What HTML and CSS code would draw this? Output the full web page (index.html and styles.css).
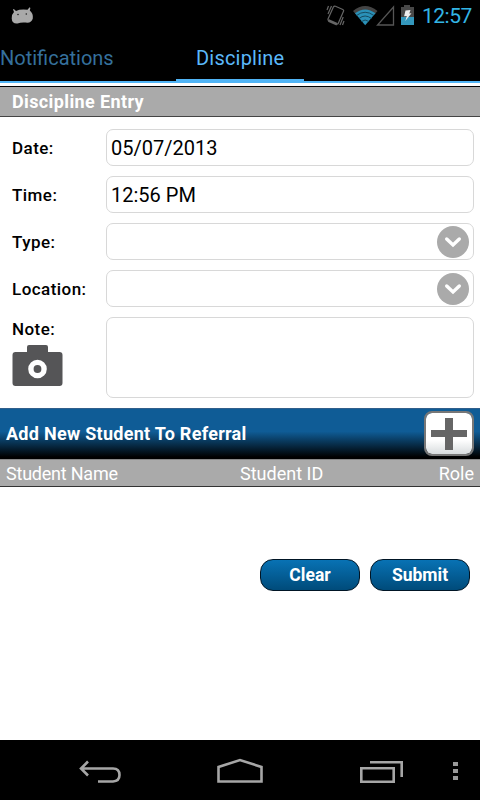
FILE: index.html
```html
<!DOCTYPE html>
<html lang="en">
<head>
<meta charset="utf-8">
<title>Discipline Entry</title>
<link rel="stylesheet" href="styles.css">
</head>
<body>
<div class="status">
  <svg class="droid" width="24" height="18" viewBox="0 0 24 18"><g fill="#a9a9a9"><path d="M5 4Q9 2 16.500 2.800L18.600 .3l.8.600-.6 2.500Q22.500 6.500 21.800 11.500Q20.500 16.500 14.500 15.500Q10 15 6.500 16.500Q1 17 .7 11.500Q.7 7 3 5L2 2.400l.8-.5z"/></g><circle cx="7" cy="7.500" r=".8" fill="#222"/><circle cx="15.300" cy="7" r=".8" fill="#222"/></svg>
  <svg class="indicators" width="92" height="24" viewBox="324 4 92 24">
    <g fill="none" stroke="#666" stroke-width="1.200"><path d="M335.500 6.200L342.800 9.500Q344 10 343.500 11.200L338.300 23.200Q337.800 24.500 336.500 24L328.600 20.400Q327.600 20 328 18.900L333.400 7Q334 5.700 335.500 6.200z"/><path d="M328.500 20.500L337 24.200" stroke-width="2.600"/><path d="M331.500 6l-3.500 8M328.500 6l-1.500 4M340 25l3.200-8M342.500 25l1.500-4"/></g>
    <path d="M353 11Q365 1 377.500 11L374.500 14.500Q365 7.500 356 14.500z" fill="#444"/>
    <path d="M355 13.300Q365 5.500 375.500 13.300L365.200 25.300z" fill="#2a91b8"/>
    <path d="M356.500 15.500Q365 9 374 15.500M359 18.500Q365 13.500 371.500 18.500M361.500 21.500Q365 18.500 369 21.500" fill="none" stroke="#164b60"/>
    <path d="M393.500 7V25H377.500z" fill="none" stroke="#555" stroke-width="1.300"/>
    <path d="M401 7h3V5h6v2h4v18h-13z" fill="#484848"/><path d="M401 17h13v8h-13z" fill="#3498bd"/><path d="M405.500 10.500l5-.5-1.200 3.500 2.200-.2-6.200 7.700 1.500-5-2.700.3z" fill="#eee"/>
  </svg>
  <span class="clock">12:57</span>
</div>
<div class="tabs"><span class="tab muted">Notifications</span><span class="tab active">Discipline</span></div>
<h1 class="title">Discipline Entry</h1>
<div class="form">
  <div class="row"><label>Date:</label><div class="field date">05/07/2013</div></div>
  <div class="row"><label>Time:</label><div class="field time">12:56 PM</div></div>
  <div class="row"><label>Type:</label><div class="field"><svg class="chevron" width="32" height="32" viewBox="0 0 32 32"><circle cx="16" cy="16" r="16" fill="#aaa"/><path d="M9.700 13l6.300 6 6.300-6" fill="none" stroke="#fff" stroke-width="3.400" stroke-linecap="round"/></svg></div></div>
  <div class="row"><label>Location:</label><div class="field"><svg class="chevron" width="32" height="32" viewBox="0 0 32 32"><circle cx="16" cy="16" r="16" fill="#aaa"/><path d="M9.700 13l6.300 6 6.300-6" fill="none" stroke="#fff" stroke-width="3.400" stroke-linecap="round"/></svg></div></div>
  <div class="row note"><div class="side"><label>Note:</label>
    <svg class="camera" width="51" height="42" viewBox="0 0 51 42"><path d="M3.500 7H15V2q0-2 2-2h17q2 0 2 2v5h11.500q3 0 3 3v28q0 3-3 3h-44q-3 0-3-3V10q0-3 3-3z" fill="#555557"/><circle cx="25.500" cy="24" r="6.600" fill="none" stroke="#fff" stroke-width="5.400"/></svg></div>
    <div class="field"></div></div>
</div>
<div class="add"><span>Add New Student To Referral</span>
  <div class="plus"><svg width="36" height="32" viewBox="0 0 36 32"><path d="M14 0h8v12h14v7H22v13h-8V19H0v-7h14z" fill="#666"/></svg></div>
</div>
<div class="columns"><span class="name">Student Name</span><span>Student ID</span><span>Role</span></div>
<div class="actions"><button>Clear</button><button>Submit</button></div>
<div class="nav">
  <svg width="480" height="60" viewBox="0 740 480 60"><g fill="none" stroke="#a6a6a6" stroke-width="2.600"><path d="M98 781.500H113Q119.500 781 119.500 775Q119.500 768.500 113 768.500H81M88 761.500l-7 7 7 7"/><path d="M218.500 781.500V767L240 760l21.500 7v14.500z"/><path d="M361.300 768.300h32.400v13.400h-32.400zM370 762.300h31.700V777"/></g><path d="M453 762h5v4h-5zM453 769h5v4h-5zM453 776h5v4h-5z" fill="#999"/></svg>
</div>
</body>
</html>
```

FILE: styles.css
```css
* { box-sizing: border-box; }
body { margin: 0; width: 480px; height: 800px; display: flex; flex-direction: column; background: #fff; color: #000; font-family: Roboto, "Liberation Sans", sans-serif; overflow: hidden; }
svg { display: block; flex: none; }
.status { height: 32px; background: #000; display: flex; padding-right: 8px; }
.droid { margin: 7px 0 0 11px; }
.indicators { margin: 4px 6px 0 auto; }
.clock { color: #33b5e5; font-size: 21px; letter-spacing: -.5px; line-height: 33px; width: 50px; white-space: nowrap; }
.tabs { height: 51px; background: #000; border-bottom: 2px solid #50b4f5; display: flex; }
.tab { font-size: 20px; line-height: 52px; height: 50px; white-space: nowrap; }
.muted { width: 176px; color: #35709c; }
.active { width: 128px; padding-left: 20px; letter-spacing: .2px; color: #5bb9fa; border-bottom: 3px solid #50b4f5; margin-bottom: -1px; }
.title { margin: 3px 0 0; height: 31px; border-top: 1px solid #000; border-bottom: 1px solid #444; background: #aaa; color: #fff; font-size: 18px; letter-spacing: .38px; line-height: 30px; padding-left: 12px; font-weight: 700; }
.form { padding: 12px 6px 0 12px; height: 291px; display: flex; flex-direction: column; gap: 10px; }
.row { display: flex; height: 37px; }
label { display: block; width: 94px; font-size: 17px; letter-spacing: .45px; line-height: 38px; font-weight: 500; }
.field { flex: 1; border: 1px solid #d8d8d8; border-radius: 7px; font-size: 20px; line-height: 37px; padding-left: 4px; }
.chevron { margin: 2px 4px 0 auto; }
.note { height: 81px; }
.side { width: 94px; }
.side label { line-height: 25px; }
.camera { margin-top: 3px; }
.add { height: 51px; background: linear-gradient(#0f5c96 0, #0f5c96 45%, #000 96%); border-top: 1px solid #315f8b; display: flex; justify-content: space-between; padding: 2px 6px 0; color: #fff; font-size: 18px; letter-spacing: .28px; line-height: 46px; font-weight: 700; }
.plus { width: 50px; height: 45px; border: 2px solid #777; border-radius: 8px; background: linear-gradient(#fff 65%, #d8dcde) padding-box; padding: 5px; }
.columns { height: 28px; background: #aaa; border-top: 1px solid #888; border-bottom: 1px solid #333; color: #fff; display: grid; grid-template-columns: 234px 1fr auto; padding: 0 6px; font-size: 18px; line-height: 27px; }
.name { letter-spacing: -.22px; }
.actions { margin-top: 72px; padding-right: 10px; display: flex; justify-content: flex-end; gap: 10px; }
button { width: 100px; height: 32px; padding: 0; border: 1px solid #001525; border-radius: 13px; background: linear-gradient(#0872b4, #004b7a); color: #fff; font: 700 17.5px Roboto, sans-serif; }
.nav { margin-top: auto; height: 60px; background: #000; }
```
